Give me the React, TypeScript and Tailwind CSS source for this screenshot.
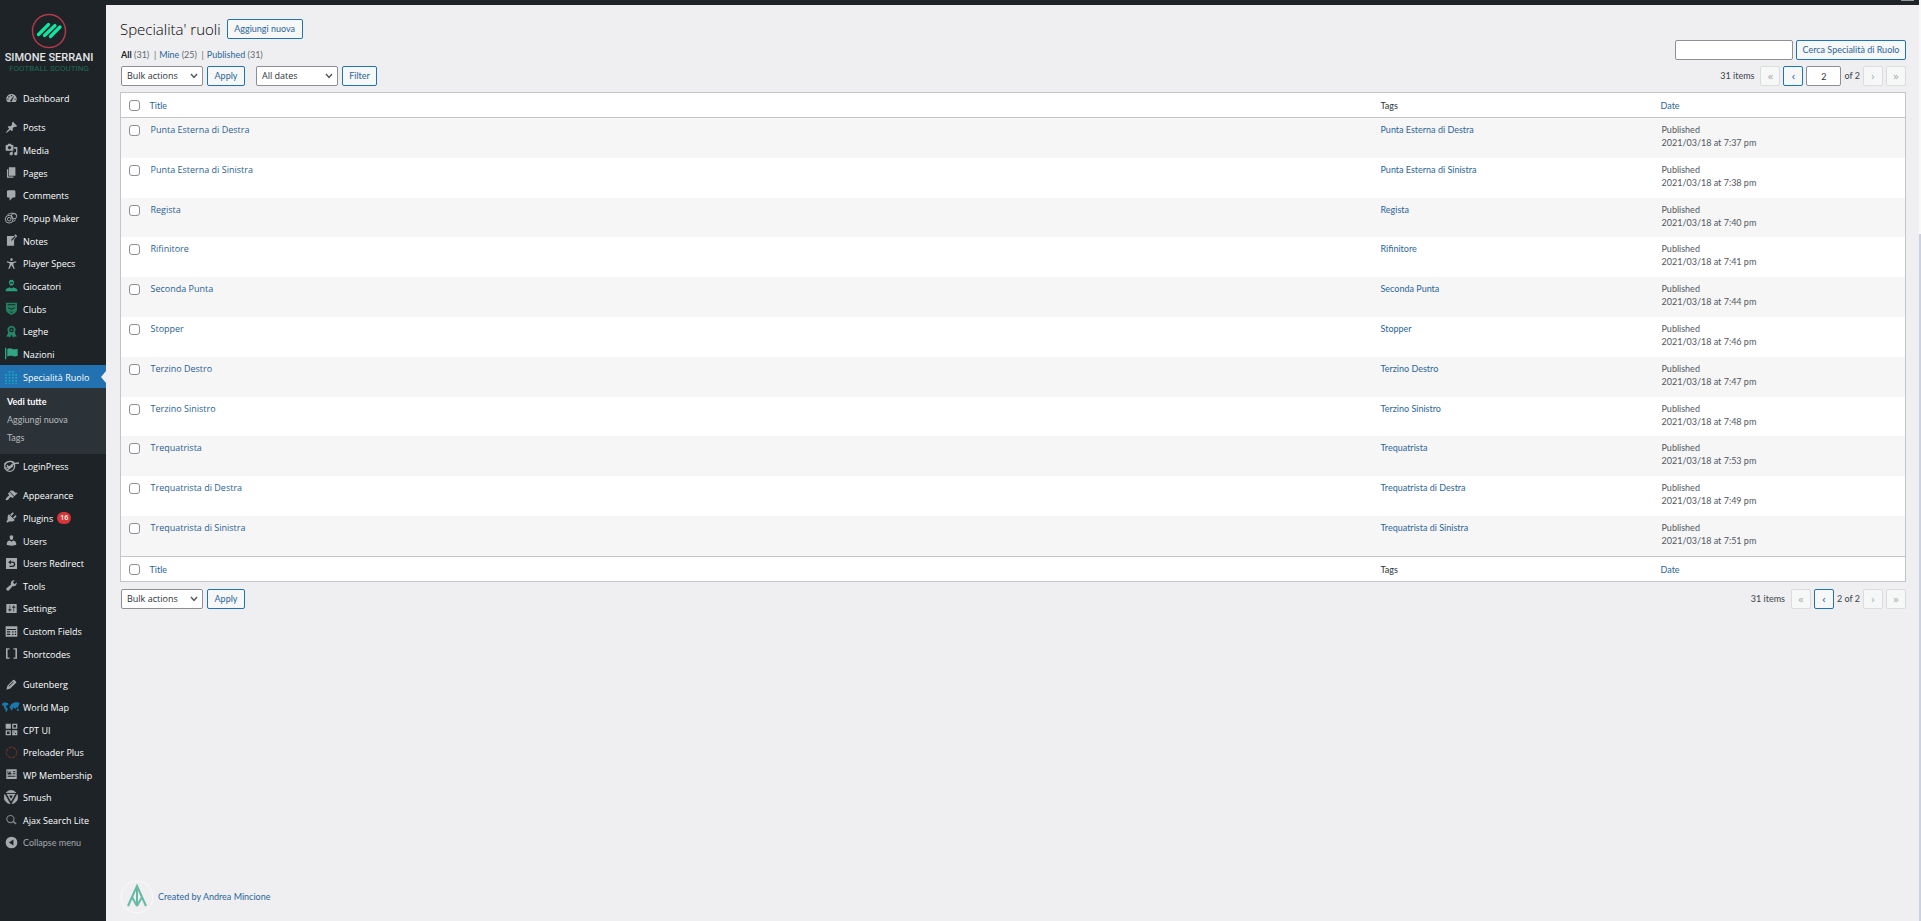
import React, { useState } from 'react';

const icons = {
  dashboard: 'M3.76 17h12.48c1.1-1.31 1.76-3.01 1.76-4.87 0-4.1-3.58-7.42-8-7.42s-8 3.32-8 7.42c0 1.86.66 3.56 1.76 4.87zM9 6h2v2H9zM5 8h2v2H5zM13 8h1l-3 6.500a1.500 1.500 0 1 1-2-1zM3.500 12h2v1.500h-2zM14.500 12h2v1.500h-2z',
  post: 'M10.44 3.02l1.82-1.82 6.36 6.35-1.83 1.82c-1.05-.68-2.48-.57-3.41.36l-.75.75c-.92.93-1.04 2.35-.35 3.41l-1.83 1.82-2.41-2.41-2.8 2.79c-.42.42-3.38 2.71-3.8 2.29s1.86-3.39 2.28-3.81l2.79-2.79L4.1 9.36l1.83-1.82c1.05.69 2.48.57 3.4-.36l.75-.75c.93-.92 1.05-2.35.36-3.41z',
  media: 'M13 11V4c0-.55-.45-1-1-1h-1.67L9 1H5L3.67 3H2c-.55 0-1 .45-1 1v7c0 .55.45 1 1 1h10c.55 0 1-.45 1-1zM7 4.5c1.38 0 2.5 1.12 2.5 2.5S8.38 9.5 7 9.5 4.5 8.38 4.5 7 5.62 4.5 7 4.5zM14 6h5v10.5c0 1.38-1.12 2.5-2.5 2.5S14 17.88 14 16.5s1.12-2.5 2.5-2.5c.17 0 .34.02.5.05V9h-3V6zm-4 8.05V13h2v3.5c0 1.38-1.12 2.5-2.5 2.5S7 17.88 7 16.5 8.12 14 9.5 14c.17 0 .34.02.5.05z',
  page: 'M6 15V2h10v13H6zm-1 1h8v2H3V5h2v11z',
  comment: 'M5 2h9c1.1 0 2 .9 2 2v7c0 1.1-.9 2-2 2h-2l-5 5v-5H5c-1.1 0-2-.9-2-2V4c0-1.1.9-2 2-2z',
  note: 'M16.89 1.2l1.41 1.41c.39.39.39 1.02 0 1.41L14 8.33V18H3V3h10.67l1.8-1.8c.4-.39 1.03-.4 1.42 0zm-5.66 8.48l5.37-5.36-1.42-1.42-5.36 5.37-.71 2.12z',
  person: 'M10 2a2 2 0 1 1 0 4 2 2 0 0 1 0-4zM3 6.500l5 1h4l5-1 .5 1.500-4.500 1.500v3l2 5.500-1.800.6L10.500 13h-1l-2.700 5.600L5 18l2-5.500v-3L2.500 8z',
  appearance: 'M14.48 11.06L7.41 3.99l1.5-1.5c.5-.56 2.3-.47 3.51.32 1.21.8 1.43 1.28 2.91 2.1 1.18.64 2.45 1.26 4.45.85zm-.71.71L6.7 4.7 4.93 6.47c-.39.39-.39 1.02 0 1.41l1.06 1.06c.39.39.39 1.03 0 1.42-.6.6-1.43 1.11-2.21 1.69-.35.26-.7.53-1.01.84C1.43 14.23.4 16.08 1.4 17.07c.99 1 2.84-.03 4.18-1.36.31-.31.58-.66.85-1.02.57-.78 1.08-1.61 1.69-2.21.39-.39 1.02-.39 1.41 0l1.06 1.06c.39.39 1.02.39 1.41 0z',
  plugin: 'M13.11 4.36L9.87 7.6 8 5.73l3.24-3.24c.35-.34 1.05-.2 1.56.32.52.51.66 1.21.31 1.55zm-8 1.77l.91-1.12 9.01 9.01-1.19.84c-.71.71-2.63 1.16-3.82 1.16H6.14L4.9 17.26c-.59.59-1.54.59-2.12 0-.59-.58-.59-1.53 0-2.12l1.24-1.24v-3.88c0-1.13.4-3.19 1.09-3.89zm7.26 3.97l3.24-3.24c.34-.35 1.04-.21 1.55.31.52.51.66 1.21.31 1.55l-3.24 3.25z',
  users: 'M10 9.25c-2.27 0-2.73-3.44-2.73-3.44C7 4.02 7.82 2 9.97 2c2.16 0 2.98 2.02 2.71 3.81 0 0-.41 3.44-2.68 3.44zm0 2.57L12.72 10c2.39 0 4.52 2.33 4.52 4.53v2.49s-3.65 1.13-7.24 1.13c-3.65 0-7.24-1.13-7.24-1.13v-2.49c0-2.25 1.94-4.48 4.47-4.48z',
  redirect: 'M1.500 1.500h17v17h-17zM5 8l4 3.500V9h2.500a2 2 0 0 1 0 4.500H7v2h4.500a4 4 0 0 0 0-8.500H9V4.500z',
  tools: 'M16.68 9.77c-1.34 1.34-3.3 1.67-4.95.99l-5.41 6.52c-.99.99-2.59.99-3.58 0s-.99-2.59 0-3.57l6.52-5.42c-.68-1.65-.35-3.61.99-4.95 1.28-1.28 3.12-1.62 4.72-1.06l-2.89 2.89 2.82 2.82 2.86-2.87c.53 1.58.18 3.39-1.08 4.65z',
  settings: 'M18 16V4c0-.55-.45-1-1-1H3c-.55 0-1 .45-1 1v12c0 .55.45 1 1 1h14c.55 0 1-.45 1-1zM8 11h1c.55 0 1 .45 1 1s-.45 1-1 1H8v1.5c0 .28-.22.5-.5.5s-.5-.22-.5-.5V13H6c-.55 0-1-.45-1-1s.45-1 1-1h1V5.5c0-.28.22-.5.5-.5s.5.22.5.5V11zm5-2h-1c-.55 0-1-.45-1-1s.45-1 1-1h1V5.5c0-.28.22-.5.5-.5s.5.22.5.5V7h1c.55 0 1 .45 1 1s-.45 1-1 1h-1v5.500c0 .28-.22.5-.5.5s-.5-.22-.5-.5V9z',
  fields: 'M1 2h18v16H1zM3 6v1.500h14V6zM3 9.500v2h5v-2zM3 13.500v2h5v-2zM11 9.500v2h2v-2zM15 9.500v2h2v-2zM11 13.500v2h2v-2zM15 13.500v2h2v-2z',
  shortcode: 'M7 16H4V4h3V2H1.500v16H7zM13 2v2h3v12h-3v2h5.500V2z',
  pencil: 'M13.89 2.39l3.21 3.22c.46.46.42 1.24.03 1.64l-9.01 9.02-6.060 1.660 1.66-6.080s8.1-8.13 8.49-8.530c.39-.39 1.220-.39 1.680.07zM12.500 5.500l-7 7 .8.8 7-7z',
  cpt: 'M1 1h8v8H1zM11 1h8v8h-8zM13 3v4h4V3zM1 11h8v8H1zM3 13v4h4v-4zM11 11h8v8h-8zM13 13v1.500h1.500V13zM15.500 15.500V17H17v-1.500z',
  membership: 'M2 2h16v15H2zM4 4v6h6V8.500L8.500 7.500 9 5.500H7L6.500 7 5 8V4zM12 5v1.500h4V5zM12 8v1.500h4V8zM4 12v1.500h12V12z',
  collapse: 'M10 1a9 9 0 1 0 0 18 9 9 0 0 0 0-18zM13 5.500v9L6 10z',
  giocatori: 'M10 1c2.600 0 4 2 4 4.500S12 10.500 10 10.500 6 8 6 5.500 7.400 1 10 1zM1 19v-2c0-2 3-3 6-4.500l3 2 3-2c3 1.500 6 2.500 6 4.500v2zM7.500 5v2h5V5z',
  clubs: 'M1.500 1h17v10c0 4.500-4 7-8.500 8.500C5.500 18 1.500 15.500 1.500 11zM4 3.500v1.500h12V3.500zM5 8l5 2.500L15 8v1.500L10 12 5 9.500zM6.500 14l3.500 1.500 3.500-1.500-3.500 3z',
  leghe: 'M10 1a6.500 6.500 0 0 1 5 10.500L18 18l-3.500-.5L12.500 19.500 10 14.500 7.500 19.500 5.500 17.500 2 18l3-6.500A6.500 6.500 0 0 1 10 1zM10 4a3.500 3.500 0 1 0 0 7 3.500 3.500 0 0 0 0-7zM10 6a1.500 1.500 0 1 1 0 3 1.500 1.500 0 0 1 0-3z',
  nazioni: 'M0 1h2v18H0zM3.500 3c3-1.500 5.500-1 8 0s5 .5 8-.5v11c-3 1.500-5.500 1.500-8 .5s-5-1-8 .5z',
  map: 'M0 4l4-2 5 1 1 3-3 1-1 3 3 2-1 4-2 2-1-5-2-2V8L0 7zM11 9l2-1 1-3 6-3 5 0 3 2-2 3-1 4-3-1-1 3-3-3-2 4-2 1-1-4-2-1zM23 13l3-1 1 3-3 1z',
};

type IconName = keyof typeof icons | 'popup' | 'grid' | 'login' | 'preloader' | 'smush' | 'search';

interface MenuEntry {
  label: string;
  icon: IconName;
  color?: string;
  badge?: number;
}

const contentMenu: MenuEntry[] = [
  { label: 'Posts', icon: 'post' },
  { label: 'Media', icon: 'media' },
  { label: 'Pages', icon: 'page' },
  { label: 'Comments', icon: 'comment' },
  { label: 'Popup Maker', icon: 'popup' },
  { label: 'Notes', icon: 'note' },
  { label: 'Player Specs', icon: 'person' },
  { label: 'Giocatori', icon: 'giocatori', color: 'text-[#2a9d7c]' },
  { label: 'Clubs', icon: 'clubs', color: 'text-[#22805f]' },
  { label: 'Leghe', icon: 'leghe', color: 'text-[#258768]' },
  { label: 'Nazioni', icon: 'nazioni', color: 'text-[#2fa582]' },
  { label: 'Specialità Ruolo', icon: 'grid', color: 'text-[#17a5c4]' },
];

const siteMenu: MenuEntry[] = [
  { label: 'Appearance', icon: 'appearance' },
  { label: 'Plugins', icon: 'plugin', badge: 16 },
  { label: 'Users', icon: 'users' },
  { label: 'Users Redirect', icon: 'redirect' },
  { label: 'Tools', icon: 'tools' },
  { label: 'Settings', icon: 'settings' },
  { label: 'Custom Fields', icon: 'fields' },
  { label: 'Shortcodes', icon: 'shortcode' },
];

const pluginMenu: MenuEntry[] = [
  { label: 'Gutenberg', icon: 'pencil' },
  { label: 'World Map', icon: 'map', color: 'text-[#1b78ad]' },
  { label: 'CPT UI', icon: 'cpt' },
  { label: 'Preloader Plus', icon: 'preloader', color: 'text-[#5c2f2c]' },
  { label: 'WP Membership', icon: 'membership' },
  { label: 'Smush', icon: 'smush' },
  { label: 'Ajax Search Lite', icon: 'search', color: 'text-[#7e8286]' },
];

const roles = [
  { title: 'Punta Esterna di Destra', time: '7:37 pm' },
  { title: 'Punta Esterna di Sinistra', time: '7:38 pm' },
  { title: 'Regista', time: '7:40 pm' },
  { title: 'Rifinitore', time: '7:41 pm' },
  { title: 'Seconda Punta', time: '7:44 pm' },
  { title: 'Stopper', time: '7:46 pm' },
  { title: 'Terzino Destro', time: '7:47 pm' },
  { title: 'Terzino Sinistro', time: '7:48 pm' },
  { title: 'Trequatrista', time: '7:53 pm' },
  { title: 'Trequatrista di Destra', time: '7:49 pm' },
  { title: 'Trequatrista di Sinistra', time: '7:51 pm' },
];

const Icon: React.FC<{ name: IconName }> = ({ name }) => {
  if (name === 'popup') {
    return (
      <svg className="h-3 w-[14px]" viewBox="0 0 22 20" fill="none" stroke="currentColor" strokeWidth={1.6}>
        <circle cx="8" cy="12" r="6.5" />
        <circle cx="8" cy="12" r="3" />
        <circle cx="16" cy="7" r="4.5" />
        <path d="M5 5c4-4 12-4 15 0M15 16l4-3" />
      </svg>
    );
  }
  if (name === 'grid') {
    return (
      <svg className="h-[14px] w-3" viewBox="0 0 12 14" fill="none" stroke="currentColor" strokeWidth={1.8} strokeDasharray="1.800 1.200">
        <path d="M1 4v10M4.500 1v13M8 1v13M11.200 4v10" />
      </svg>
    );
  }
  if (name === 'login') {
    return (
      <svg className="h-[14px] w-4" viewBox="0 0 24 21" fill="none" stroke="currentColor" strokeWidth={2}>
        <circle cx="10" cy="11" r="7.500" />
        <path d="M2 8c5-5 12-6 15-2M2 14c6 0 8-2 10-4s6-4 12-4M6 17l9-7M6 9c1 3 3 3 5 2" />
      </svg>
    );
  }
  if (name === 'preloader') {
    return (
      <svg className="size-[13px]" viewBox="0 0 20 20" fill="none" stroke="currentColor" strokeWidth={2.2}>
        <circle cx="10" cy="10" r="8" strokeDasharray="5 1.500" />
      </svg>
    );
  }
  if (name === 'smush') {
    return (
      <svg className="size-[14px]" viewBox="0 0 20 20" fill="none" stroke="currentColor">
        <path d="M3 3.800a9.300 9.300 0 0 1 14 0zM1 6.500l7.500 13A9.500 9.500 0 0 1 1 6.500zM19 6.500l-7.500 13A9.500 9.500 0 0 0 19 6.500z" fill="currentColor" />
        <path d="M5.500 6.800h9L10 14.500z" strokeWidth={2} />
      </svg>
    );
  }
  if (name === 'search') {
    return (
      <svg className="size-3" viewBox="0 0 20 20" fill="none" stroke="currentColor" strokeWidth={2}>
        <circle cx="9" cy="8.500" r="6" />
        <path d="M13.500 12.500l5 4" strokeWidth={3} />
      </svg>
    );
  }
  if (name === 'map') {
    return (
      <svg className="h-3 w-[18px] shrink-0" viewBox="0 0 28 19" fill="currentColor">
        <path d={icons.map} />
      </svg>
    );
  }
  return (
    <svg className="size-[13px]" viewBox="0 0 20 20" fill="currentColor" fillRule="evenodd">
      <path d={icons[name]} />
    </svg>
  );
};

const MenuItem: React.FC<{ entry: MenuEntry; active?: boolean }> = ({ entry, active }) => (
  <li className={`relative flex items-center ${active ? 'bg-[#2271b1]' : ''}`}>
    <a href="#" className="flex w-full items-center text-[9px] leading-3 text-white">
      <span className={`flex w-[22px] shrink-0 justify-center ${entry.color ?? 'text-[#a7aaad]'}`}>
        <Icon name={entry.icon} />
      </span>
      <span className="whitespace-nowrap pl-px pt-[2px]">{entry.label}</span>
      {entry.badge && (
        <span className="ml-1 rounded-full bg-[#d63638] px-[3px] text-[7px] font-semibold leading-3 text-white">{entry.badge}</span>
      )}
    </a>
    {active && (
      <svg className="absolute right-0 h-3 w-[5px]" viewBox="0 0 5 12" fill="#efeff1">
        <path d="M5 0v12L0 6z" />
      </svg>
    )}
  </li>
);

const Sidebar: React.FC = () => (
  <nav className="w-[106px] shrink-0 bg-[#1d2327]" aria-label="Main menu">
    <a href="#" className="flex h-[81px] flex-col items-center whitespace-nowrap pr-2 pt-2 font-['Roboto',sans-serif]">
      <svg className="size-9 shrink-0" viewBox="0 0 36 36" fill="none">
        <circle cx="18" cy="18" r="16.500" stroke="#b03a4a" strokeWidth={1.500} />
        <g stroke="#0fe6a2" strokeWidth={3.200} strokeLinecap="round">
          <path d="M7.500 21.500L17.500 11.500M13.500 22.500L24 12.500M19.500 23.500L29 14" />
        </g>
      </svg>
      <span className="mt-[3px] text-[11px] font-medium leading-3 text-[#e4e6e7]">SIMONE SERRANI</span>
      <span className="text-[8px] leading-[9px] text-[#1f6b55]">FOOTBALL SCOUTING</span>
    </a>
    <ul className="mb-[7px] grid h-[23px]">
      <MenuItem entry={{ label: 'Dashboard', icon: 'dashboard' }} />
    </ul>
    <ul className="grid h-[272px] auto-rows-fr">
      {contentMenu.map(entry => (
        <MenuItem key={entry.label} entry={entry} active={entry.icon === 'grid'} />
      ))}
    </ul>
    <ul className="h-[66px] bg-[#2c3338] pl-[7px] pt-[5px] font-['Lato',sans-serif] text-[9px] leading-[18px] text-[#b4b9be]">
      <li><a href="#" className="font-bold text-white">Vedi tutte</a></li>
      <li><a href="#">Aggiungi nuova</a></li>
      <li><a href="#">Tags</a></li>
    </ul>
    <ul className="mb-[7px] grid h-[23px]">
      <MenuItem entry={{ label: 'LoginPress', icon: 'login' }} />
    </ul>
    <ul className="mb-2 grid h-[181px] auto-rows-fr">
      {siteMenu.map(entry => (
        <MenuItem key={entry.label} entry={entry} />
      ))}
    </ul>
    <div className="grid h-[181px] auto-rows-fr">
      <ul className="row-span-7 grid auto-rows-fr">
        {pluginMenu.map(entry => (
          <MenuItem key={entry.label} entry={entry} />
        ))}
      </ul>
      <button type="button" className="flex items-center font-['Lato',sans-serif] text-[9px] leading-3 text-[#a7aaad]">
        <span className="flex w-[22px] justify-center"><Icon name="collapse" /></span>
        <span className="pl-px">Collapse menu</span>
      </button>
    </div>
  </nav>
);

const Button: React.FC<{ children: React.ReactNode; className?: string }> = ({ children, className = '' }) => (
  <button type="button" className={`h-5 rounded-[2px] border border-[#2271b1] bg-[#f6f7f7] text-[9px] leading-3 text-[#2b6599] ${className}`}>
    {children}
  </button>
);

const Select: React.FC<{ label: string; option: string }> = ({ label, option }) => (
  <div className="relative w-[82px]">
    <select aria-label={label} className="block h-5 w-full appearance-none rounded-[2px] border border-[#8c8f94] bg-white pl-[5px] font-['Open_Sans',sans-serif] text-[9px] leading-3 text-[#2c3338]">
      <option>{option}</option>
    </select>
    <svg className="pointer-events-none absolute right-[5px] top-[7px] h-[6px] w-2" viewBox="0 0 8 6" fill="none" stroke="#50575e" strokeWidth={1.400}>
      <path d="M1 1l3 3.500L7 1" />
    </svg>
  </div>
);

const PageButton: React.FC<{ label: string; glyph: string; enabled?: boolean }> = ({ label, glyph, enabled }) => (
  <button
    type="button"
    aria-label={label}
    disabled={!enabled}
    className={`size-5 rounded-[2px] border bg-[#f6f7f7] font-['Open_Sans',sans-serif] text-[11px] leading-3 ${enabled ? 'border-[#2271b1] text-[#2b6599]' : 'border-[#dcdcde] text-[#a7aaad]'}`}
  >
    {glyph}
  </button>
);

const Pagination: React.FC<{ editable?: boolean }> = ({ editable }) => {
  const [page, setPage] = useState('2');

  return (
    <div className="flex items-center gap-[3px] text-[9px] leading-3 text-[#3c434a]">
      <span className="mr-[3px]">31 items</span>
      <PageButton label="First page" glyph="«" />
      <PageButton label="Previous page" glyph="‹" enabled />
      {editable ? (
        <>
          <input
            aria-label="Current page"
            value={page}
            onChange={e => setPage(e.target.value)}
            className="h-5 w-[35px] rounded-[2px] border border-[#8c8f94] bg-white text-center text-[#2c3338]"
          />
          <span>of 2</span>
        </>
      ) : (
        <span>2 of 2</span>
      )}
      <PageButton label="Next page" glyph="›" />
      <PageButton label="Last page" glyph="»" />
    </div>
  );
};

const Checkbox: React.FC<{ label: string; checked: boolean; onChange: () => void }> = ({ label, checked, onChange }) => (
  <input
    type="checkbox"
    aria-label={label}
    checked={checked}
    onChange={onChange}
    className="block size-[11px] appearance-none rounded-[3px] border border-[#8c8f94] bg-white checked:bg-[#2271b1]"
  />
);

const RolesTable: React.FC = () => {
  const [selected, setSelected] = useState<string[]>([]);
  const allSelected = selected.length === roles.length;

  const toggle = (title: string) =>
    setSelected(selected.includes(title) ? selected.filter(item => item !== title) : [...selected, title]);
  const toggleAll = () => setSelected(allSelected ? [] : roles.map(role => role.title));

  const headings = (
    <tr className="h-[25px] bg-white">
      <td className="w-[24px] pl-2"><Checkbox label="Select all" checked={allSelected} onChange={toggleAll} /></td>
      <th className="px-[5px] font-normal"><a href="#" className="text-[#2b6599]">Title</a></th>
      <th className="w-[280px] px-[5px] font-normal text-[#2c3338]">Tags</th>
      <th className="w-[250px] px-[5px] font-normal"><a href="#" className="text-[#2b6599]">Date</a></th>
    </tr>
  );

  return (
    <table className="h-[490px] w-full table-fixed border-collapse border border-[#c3c4c7] text-left text-[9px] leading-[13px]">
      <thead className="border-b border-[#c3c4c7]">{headings}</thead>
      <tbody>
        {roles.map(role => (
          <tr key={role.title} className="bg-white align-top odd:bg-[#f6f6f7]">
            <td className="pl-2 pt-[7px]">
              <Checkbox label={`Select ${role.title}`} checked={selected.includes(role.title)} onChange={() => toggle(role.title)} />
            </td>
            <td className="px-[6px] pt-[5px]"><a href="#" className="font-['Open_Sans',sans-serif] text-[#2a5f93]">{role.title}</a></td>
            <td className="px-[5px] pt-[5px]"><a href="#" className="text-[#2b6599]">{role.title}</a></td>
            <td className="px-[6px] py-[5px] text-[#50575e]">
              Published
              <br />
              2021/03/18 at {role.time}
            </td>
          </tr>
        ))}
      </tbody>
      <tfoot className="border-t border-[#c3c4c7]">{headings}</tfoot>
    </table>
  );
};

const App: React.FC = () => (
  <div className="flex min-h-screen bg-[#efeff1] font-['Open_Sans','Noto_Sans',sans-serif] text-[#3c434a]">
    <div className="flex min-w-0 flex-1 flex-col">
      <header className="flex h-[5px] items-start justify-end bg-[#1d2327] pr-[5px]">
        <span className="h-px w-[13px] bg-[#8f9a9c]"></span>
      </header>
      <div className="flex flex-1">
        <Sidebar />
        <main className="flex min-w-0 flex-1 flex-col pl-[14px] pr-[13px] font-['Lato',sans-serif]">
          <div className="mt-[14px] flex items-center gap-[6px]">
            <h1 className="font-['Open_Sans',sans-serif] text-[15px] font-light leading-5 text-black">Specialita&apos; ruoli</h1>
            <Button className="w-[76px]">Aggiungi nuova</Button>
          </div>

          <div className="mb-[6px] mt-px flex items-end justify-between">
            <ul className="flex gap-[3px] pl-px text-[9px] leading-[10px] text-[#646970]">
              <li><a href="#" className="font-bold text-[#1d2327]">All</a> (31) &nbsp;|</li>
              <li><a href="#" className="text-[#2b6599]">Mine</a> (25) &nbsp;|</li>
              <li><a href="#" className="text-[#2b6599]">Published</a> (31)</li>
            </ul>
            <form className="flex gap-[3px]" onSubmit={e => e.preventDefault()}>
              <input aria-label="Cerca" type="search" className="h-5 w-[118px] rounded-[2px] border border-[#8c8f94] bg-white px-1 text-[9px]" />
              <Button className="w-[110px]">Cerca Specialità di Ruolo</Button>
            </form>
          </div>

          <div className="mb-[6px] flex items-center justify-between">
            <div className="flex items-center pl-px">
              <Select label="Bulk actions" option="Bulk actions" />
              <Button className="ml-1 w-[38px]">Apply</Button>
              <div className="ml-[11px]"><Select label="Filter by date" option="All dates" /></div>
              <Button className="ml-1 w-[35px]">Filter</Button>
            </div>
            <Pagination editable />
          </div>

          <RolesTable />

          <div className="mt-[7px] flex items-center justify-between">
            <div className="flex items-center pl-px">
              <Select label="Bulk actions" option="Bulk actions" />
              <Button className="ml-1 w-[38px]">Apply</Button>
            </div>
            <Pagination />
          </div>

          <footer className="mb-[7px] mt-auto flex items-center gap-1">
            <svg className="size-[34px]" viewBox="0 0 34 34" fill="none">
              <circle cx="17" cy="17" r="16" stroke="#fafafa" />
              <path d="M8 26l9-20 9 20M17 6v20M17 26l-5-9M17 26l5-9" stroke="#66b9a3" strokeWidth={2} />
            </svg>
            <a href="#" className="text-[9px] leading-3 text-[#2b6599]">Created by Andrea Mincione</a>
          </footer>
        </main>
      </div>
    </div>
    <div className="w-[2px] bg-[#f9f9f9] pt-[234px]">
      <div className="h-full bg-[#c8d1de]"></div>
    </div>
  </div>
);

export default App;
